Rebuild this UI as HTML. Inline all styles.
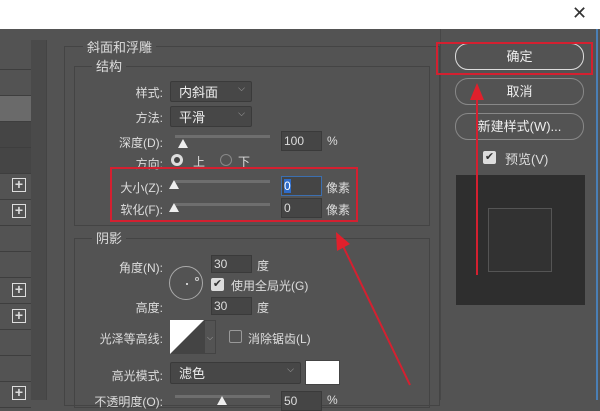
<!DOCTYPE html><html><head><meta charset="utf-8"><style>
*{margin:0;padding:0;box-sizing:border-box}
body{width:600px;height:400px;overflow:hidden;background:#535353;position:relative;font-family:"Liberation Sans","Noto Sans CJK SC",sans-serif;color:#ddd;font-size:12px}
.a{position:absolute}
.row{position:absolute;left:0;width:31px;height:26px;border-bottom:1px solid #3e3e3e;background:#535353}
.plus{position:absolute;left:12px;width:14px;height:14px;border:1px solid #ddd;color:#ddd;font-size:14px;line-height:11px;text-align:center;font-weight:bold}
.lbl{position:absolute;text-align:right;width:120px;font-size:12px;color:#ddd;white-space:nowrap}
.sel{position:absolute;background:#474747;border:1px solid #3a3a3a;border-radius:2px;color:#eee;padding-left:8px;font-size:13px}
.sel:after{content:"⌵";position:absolute;right:6px;top:1px;font-size:9px;color:#aaa}
.inp{position:absolute;background:#454545;border:1px solid #3a3a3a;color:#ddd;padding-left:2px;font-size:12px;line-height:18px}
.track{position:absolute;height:3px;background:#6e6e6e}
.thumb{position:absolute;width:0;height:0;border-left:5px solid transparent;border-right:5px solid transparent;border-bottom:9px solid #eee}
.btn{position:absolute;left:455px;width:129px;height:27px;border:1px solid #888;border-radius:13px;text-align:center;line-height:25px;color:#eee;font-size:13px}
.frame{position:absolute;border:1px solid #444}
.ttl{position:absolute;background:#535353;padding:0 4px;font-size:13px;color:#ddd}
.cb{position:absolute;width:13px;height:13px;border-radius:2px}
</style></head><body>
<div class="a" style="left:0;top:0;width:600px;height:29px;background:#fff"></div>
<div class="a" style="left:572px;top:3px;font-size:18px;color:#333">✕</div>
<div class="a" style="left:596px;top:29px;width:2px;height:371px;background:#4a7fb5"></div>
<div class="a" style="left:31px;top:40px;width:16px;height:360px;background:#4a4a4a;border-right:1px solid #444"></div>
<div class="row" style="top:40px;height:30px"></div>
<div class="row" style="top:70px"></div>
<div class="row" style="top:96px;background:#6a6a6a"></div>
<div class="row" style="top:122px;background:#454545"></div>
<div class="row" style="top:148px;background:#454545"></div>
<div class="row" style="top:174px"></div><div class="plus" style="top:178px">+</div>
<div class="row" style="top:200px"></div><div class="plus" style="top:204px">+</div>
<div class="row" style="top:226px"></div>
<div class="row" style="top:252px"></div>
<div class="row" style="top:278px"></div><div class="plus" style="top:283px">+</div>
<div class="row" style="top:304px"></div><div class="plus" style="top:309px">+</div>
<div class="row" style="top:330px"></div>
<div class="row" style="top:356px"></div>
<div class="row" style="top:382px"></div><div class="plus" style="top:386px">+</div>

<div class="frame" style="left:64px;top:46px;width:376px;height:360px"></div>
<div class="ttl" style="left:83px;top:37px">斜面和浮雕</div>
<div class="frame" style="left:74px;top:66px;width:356px;height:160px"></div>
<div class="ttl" style="left:92px;top:56px">结构</div>

<div class="lbl" style="left:43px;top:84px">样式:</div>
<div class="sel" style="left:170px;top:81px;width:82px;height:21px">内斜面</div>
<div class="lbl" style="left:43px;top:109px">方法:</div>
<div class="sel" style="left:170px;top:106px;width:82px;height:21px">平滑</div>
<div class="lbl" style="left:43px;top:134px">深度(D):</div>
<div class="track" style="left:175px;top:135px;width:95px"></div>
<div class="thumb" style="left:178px;top:139px"></div>
<div class="inp" style="left:281px;top:131px;width:41px;height:20px">100</div>
<div class="a" style="left:327px;top:134px">%</div>
<div class="lbl" style="left:43px;top:155px">方向:</div>
<div class="a" style="left:171px;top:154px;width:12px;height:12px;border-radius:50%;background:#ddd"><div class="a" style="left:3px;top:3px;width:6px;height:6px;border-radius:50%;background:#444"></div></div>
<div class="a" style="left:193px;top:153px">上</div>
<div class="a" style="left:220px;top:154px;width:12px;height:12px;border-radius:50%;border:1px solid #888"></div>
<div class="a" style="left:238px;top:153px">下</div>
<div class="lbl" style="left:43px;top:179px">大小(Z):</div>
<div class="track" style="left:175px;top:180px;width:95px"></div>
<div class="thumb" style="left:169px;top:180px"></div>
<div class="inp" style="left:281px;top:176px;width:41px;height:20px;border-color:#3c6fb0"><span style="background:#2f6cc8;color:#fff">0</span></div>
<div class="a" style="left:326px;top:179px">像素</div>
<div class="lbl" style="left:43px;top:201px">软化(F):</div>
<div class="track" style="left:175px;top:203px;width:95px"></div>
<div class="thumb" style="left:169px;top:203px"></div>
<div class="inp" style="left:281px;top:198px;width:41px;height:20px">0</div>
<div class="a" style="left:326px;top:201px">像素</div>

<div class="frame" style="left:74px;top:238px;width:356px;height:170px"></div>
<div class="ttl" style="left:92px;top:228px">阴影</div>
<div class="lbl" style="left:43px;top:259px">角度(N):</div>
<div class="a" style="left:169px;top:266px;width:34px;height:34px;border-radius:50%;border:1px solid #aaa"></div>
<div class="a" style="left:186px;top:283px;width:2px;height:2px;background:#ccc"></div>
<div class="a" style="left:195px;top:277px;width:4px;height:4px;border-radius:50%;border:1px solid #ccc"></div>
<div class="inp" style="left:211px;top:255px;width:41px;height:18px;line-height:16px">30</div>
<div class="a" style="left:257px;top:257px">度</div>
<div class="cb" style="left:211px;top:278px;background:#ddd;color:#333;font-size:11px;line-height:13px;text-align:center">✔</div>
<div class="a" style="left:231px;top:277px">使用全局光(G)</div>
<div class="lbl" style="left:43px;top:299px">高度:</div>
<div class="inp" style="left:211px;top:297px;width:41px;height:18px;line-height:16px">30</div>
<div class="a" style="left:257px;top:299px">度</div>
<div class="lbl" style="left:43px;top:330px">光泽等高线:</div>
<svg class="a" style="left:170px;top:320px" width="47" height="35"><rect x="0" y="0" width="34" height="34" fill="#444"/><polygon points="0,34 34,0 0,0" fill="#fff"/><rect x="34.5" y="0.5" width="11" height="33" fill="#535353" stroke="#444"/><text x="37" y="20" font-size="8" fill="#aaa">⌵</text></svg>
<div class="cb" style="left:229px;top:330px;border:1px solid #999"></div>
<div class="a" style="left:248px;top:330px">消除锯齿(L)</div>
<div class="lbl" style="left:43px;top:367px">高光模式:</div>
<div class="sel" style="left:170px;top:362px;width:131px;height:22px">滤色</div>
<div class="a" style="left:305px;top:360px;width:35px;height:25px;background:#fff;border:1px solid #444"></div>
<div class="lbl" style="left:43px;top:393px">不透明度(O):</div>
<div class="track" style="left:175px;top:395px;width:95px"></div>
<div class="thumb" style="left:217px;top:396px"></div>
<div class="inp" style="left:281px;top:391px;width:41px;height:20px">50</div>
<div class="a" style="left:327px;top:393px">%</div>

<div class="a" style="left:440px;top:29px;width:1px;height:371px;background:#474747"></div>
<div class="btn" style="top:43px;border-color:#ddd">确定</div>
<div class="btn" style="top:78px">取消</div>
<div class="btn" style="top:113px">新建样式(W)...</div>
<div class="cb" style="left:483px;top:151px;background:#ddd;color:#333;font-size:11px;line-height:13px;text-align:center">✔</div>
<div class="a" style="left:505px;top:149px;font-size:13px">预览(V)</div>
<div class="a" style="left:456px;top:175px;width:129px;height:130px;background:#2e2e2e"></div>
<div class="a" style="left:488px;top:208px;width:64px;height:64px;border:1px solid #555;background:#323232"></div>

<div class="a" style="left:436px;top:42px;width:157px;height:33px;border:2px solid #d42030"></div>
<div class="a" style="left:110px;top:167px;width:248px;height:55px;border:2px solid #d42030"></div>
<svg class="a" style="left:0;top:0" width="600" height="400"><line x1="477" y1="275" x2="477" y2="96" stroke="#d42030" stroke-width="2"/><polygon points="477,83 470,100 484,100" fill="#e0202c"/><line x1="410" y1="385" x2="342" y2="244" stroke="#d42030" stroke-width="2"/><polygon points="336,232 337,251 350,244" fill="#e0202c"/></svg>
</body></html>
